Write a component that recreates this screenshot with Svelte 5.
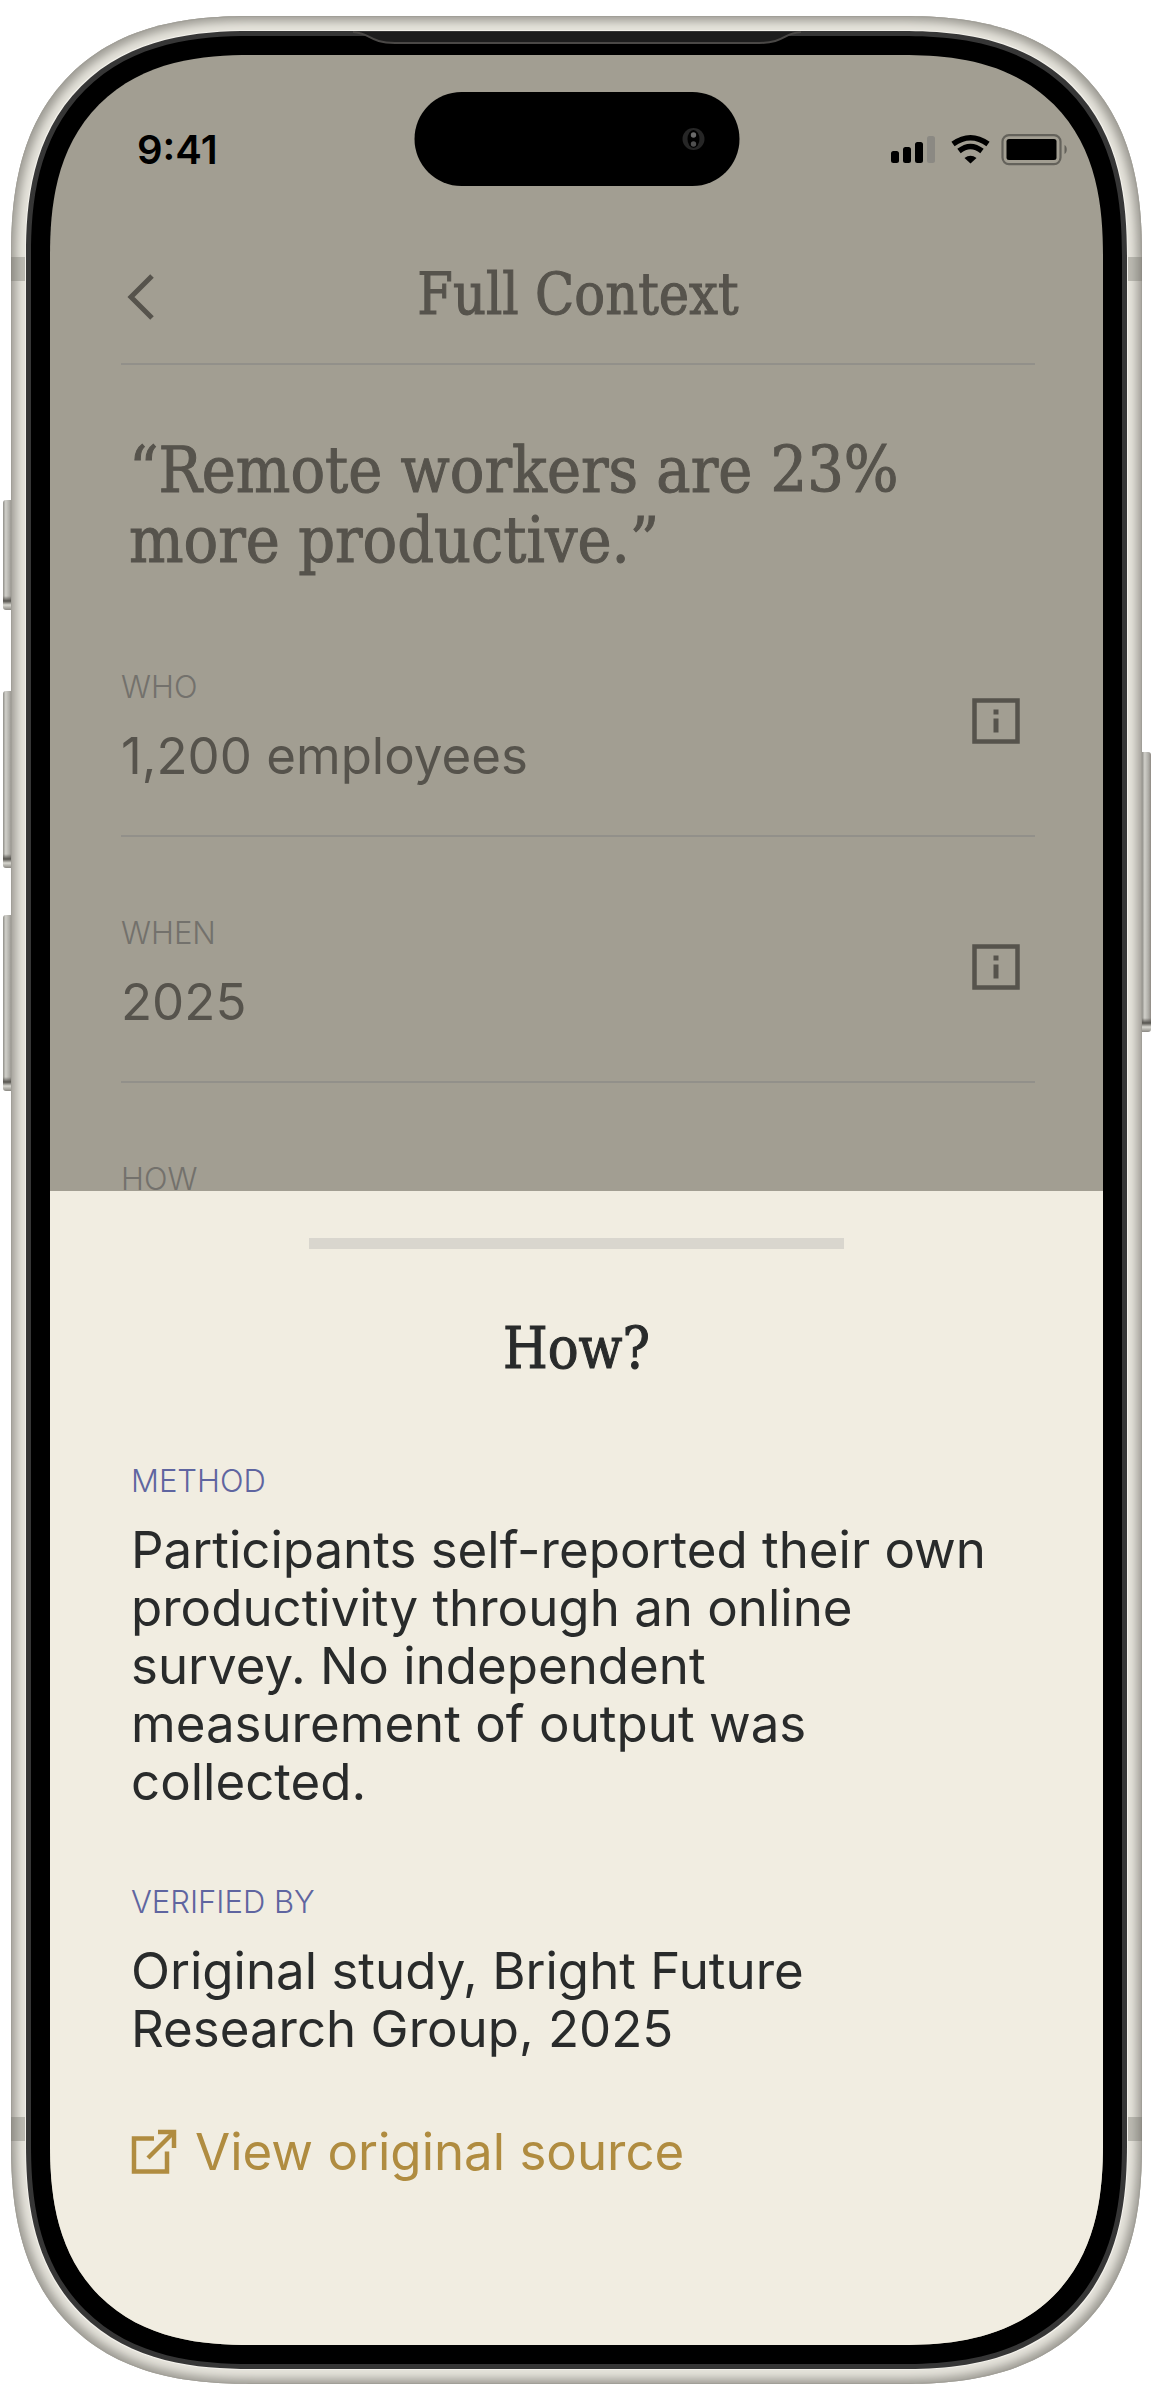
<script lang="ts">
	const facts = [
		{ label: 'Who', value: '1,200 employees' },
		{ label: 'When', value: '2025' },
		{ label: 'How' }
	];

	const details = [
		{
			label: 'Method',
			text: 'Participants self-reported their own productivity through an online survey. No independent measurement of output was collected.'
		},
		{ label: 'Verified by', text: 'Original study, Bright Future Research Group, 2025' }
	];
</script>

<main class="phone">
	<span class="key key--action"></span>
	<span class="key key--up"></span>
	<span class="key key--down"></span>
	<span class="key key--power"></span>

	<div class="metal">
		<span class="band band--tl"></span>
		<span class="band band--tr"></span>
		<span class="band band--bl"></span>
		<span class="band band--br"></span>
		<div class="rim">
			<svg class="speaker" width="452" height="14" viewBox="0 0 452 14" aria-hidden="true">
				<path d="M2 1C20 2 18 12 44 12H408C434 12 432 2 450 1Z" fill="#1d1d1d" />
				<path d="M2 1C20 2 18 12 44 12H408C434 12 432 2 450 1" fill="none" stroke="#4a4846" stroke-width="2" />
			</svg>
			<div class="bezel">
				<div class="screen">
					<div class="island">
						<svg width="24" height="24" viewBox="0 0 24 24" aria-hidden="true">
							<circle cx="12" cy="12" r="11" fill="#262626" />
							<ellipse cx="12" cy="12" rx="6" ry="9" fill="#000" />
							<circle cx="12" cy="8" r="2.700" fill="#6a6a6a" />
							<circle cx="12" cy="17" r="2.700" fill="#505050" />
						</svg>
					</div>

					<section class="page">
						<div class="status">
							<time>9:41</time>
							<svg width="178" height="32" viewBox="0 0 178 32" aria-hidden="true">
								<rect x="1" y="17" width="8" height="12" rx="2.5" />
								<rect x="13" y="13" width="8" height="16" rx="2.5" />
								<rect x="25" y="8" width="8" height="21" rx="2.5" />
								<rect x="37" y="2" width="8" height="27" rx="2.5" fill="#8b8983" />
								<path d="M63 10Q80.500 -2.500 98 10" fill="none" stroke="#000" stroke-width="5.500" />
								<path d="M69 17Q80.500 8 92 17" fill="none" stroke="#000" stroke-width="5.500" />
								<path d="M74.500 24Q80.500 19.500 86.500 24L80.500 29.500Z" />
								<rect x="112.500" y="1.100" width="58" height="29" rx="6.500" fill="none" stroke="#64625b" stroke-width="2.200" />
								<rect x="116.500" y="5" width="50" height="21" rx="2.500" />
								<path d="M174.500 11c3 1 3 8 0 9z" fill="#64625b" />
							</svg>
						</div>

						<header>
							<button class="back" aria-label="Back">
								<svg width="28" height="46" viewBox="0 0 28 46" aria-hidden="true">
									<path d="M25 2L4 23L25 44" fill="none" stroke="currentColor" stroke-width="5" />
								</svg>
							</button>
							<h1>Full Context</h1>
						</header>

						<blockquote>“Remote workers are 23% more productive.”</blockquote>

						<dl class="facts">
							{#each facts as fact}
								<div class="fact">
									<div>
										<dt class="label">{fact.label}</dt>
										{#if fact.value}
											<dd>{fact.value}</dd>
										{/if}
									</div>
									{#if fact.value}
										<button class="info" aria-label="About {fact.label}">
											<svg width="48" height="46" viewBox="0 0 48 46" aria-hidden="true">
												<rect x="2.500" y="2.500" width="43" height="41" fill="none" stroke="currentColor" stroke-width="4.500" />
												<path d="M21.500 11.500h5v5h-5zM21.500 20.500h5v14h-5z" fill="currentColor" />
											</svg>
										</button>
									{/if}
								</div>
							{/each}
						</dl>
					</section>

					<section class="sheet">
						<div class="handle"></div>
						<h2>How?</h2>
						{#each details as detail}
							<h3 class="label">{detail.label}</h3>
							<p>{detail.text}</p>
						{/each}
						<a href="#source">
							<svg width="46" height="46" viewBox="0 0 46 46" aria-hidden="true">
								<g fill="none" stroke="currentColor" stroke-width="4.500">
									<path d="M23 9.500H3V42.500H36V22.500" />
									<path d="M27 3H43V19" />
									<path d="M43 3L17 29" />
								</g>
							</svg>
							View original source
						</a>
					</section>
				</div>
			</div>
		</div>
	</div>
</main>

<style>
	:global(body) {
		margin: 0;
		background: #fff;
	}

	.phone {
		--serif: 'DejaVu Serif Condensed', 'DejaVu Serif', serif;
		--sans: Inter, sans-serif;

		position: relative;
		box-sizing: border-box;
		padding: 16px 10px 16px 11px;
		font-family: var(--sans);
	}

	h1,
	h2,
	h3,
	p,
	dl,
	dd,
	blockquote {
		margin: 0;
		font-weight: 400;
	}

	button {
		padding: 0;
		border: none;
		background: none;
		color: inherit;
	}

	svg {
		display: block;
	}

	/* Casing */

	.metal,
	.rim,
	.bezel,
	.screen {
		position: relative;
	}

	.metal {
		padding: 15px;
		border-radius: 200px;
		background: #e6e4dc;
		box-shadow:
			inset 0 0 0 1px #a19f98,
			inset 0 0 10px 5px #9d9b94;
	}

	.rim {
		padding: 5px;
		border-radius: 185px;
		background: #363636;
		box-shadow: 0 0 0 1px #f2f0ea;
	}

	.bezel {
		padding: 19px;
		border-radius: 180px;
		background: #000;
	}

	.screen {
		overflow: hidden;
		border-radius: 160px;
		background: #a29e92;
	}

	@supports (corner-shape: superellipse(1.3)) {
		.metal,
		.rim,
		.bezel,
		.screen {
			corner-shape: superellipse(1.3);
		}

		.metal {
			border-radius: 240px;
		}

		.rim {
			border-radius: 225px;
		}

		.bezel {
			border-radius: 220px;
		}

		.screen {
			border-radius: 201px;
		}
	}

	.band {
		position: absolute;
		width: 15px;
		height: 24px;
		background: rgb(110 108 100 / 0.35);
	}

	.band--tl,
	.band--tr {
		top: 241px;
	}

	.band--bl,
	.band--br {
		bottom: 243px;
	}

	.band--tl,
	.band--bl {
		left: 0;
	}

	.band--tr,
	.band--br {
		right: 0;
	}

	.key {
		position: absolute;
		left: 3px;
		width: 9px;
		border-radius: 3px 0 0 3px;
		background:
			linear-gradient(transparent calc(100% - 14px), #55534e calc(100% - 9px), #d8d7d0 calc(100% - 5px), #8a8882),
			linear-gradient(90deg, #8f8e88, #d0cfc9 30%, #b0afa9 70%, #8f8a84);
	}

	.key--action {
		top: 500px;
		height: 110px;
	}

	.key--up {
		top: 691px;
		height: 177px;
	}

	.key--down {
		top: 915px;
		height: 176px;
	}

	.key--power {
		top: 752px;
		right: 1px;
		left: auto;
		height: 280px;
		border-radius: 0 3px 3px 0;
	}

	.speaker {
		position: absolute;
		top: 0;
		left: 50%;
		z-index: 1;
		transform: translateX(-50%);
	}

	.island {
		position: absolute;
		top: 37px;
		left: 50%;
		display: flex;
		justify-content: flex-end;
		align-items: center;
		box-sizing: border-box;
		padding-right: 34px;
		width: 325px;
		height: 94px;
		border-radius: 47px;
		background: #000;
		transform: translateX(-50%);
	}

	/* Dimmed page */

	.page {
		display: flow-root;
		padding: 0 68px 0 71px;
		color: #56534c;
	}

	.status {
		display: flex;
		justify-content: space-between;
		align-items: center;
		margin: 71px -33px 0 16px;
		height: 48px;
	}

	.status time {
		color: #000;
		font: 600 40px/48px Inter, sans-serif;
	}

	header {
		display: grid;
		grid-template-columns: 40px 1fr 40px;
		align-items: center;
		margin-top: 32px;
		padding-top: 24px;
		height: 133px;
		border-bottom: 2px solid #92908a;
	}

	.back {
		padding-left: 6px;
	}

	h1,
	h2 {
		font: 57px/72px var(--serif);
		text-align: center;
	}

	h1,
	h2,
	blockquote {
		-webkit-text-stroke: 1px currentColor;
	}

	h1 {
		margin-bottom: 6px;
	}

	blockquote {
		margin: 70px 8px 0;
		font: 64px/70px var(--serif);
	}

	.label {
		font: 300 31px/40px var(--sans);
		text-transform: uppercase;
	}

	.facts {
		margin-top: 92px;
	}

	.fact {
		display: flex;
		justify-content: space-between;
		align-items: flex-start;
	}

	.fact:not(:last-child) {
		box-sizing: border-box;
		margin-bottom: 76px;
		height: 170px;
		border-bottom: 2px solid #92908a;
	}

	.fact .label {
		color: #73716c;
	}

	.fact dd {
		margin-top: 20px;
		font-size: 51px;
		line-height: 58px;
	}

	.info {
		margin: 31px 15px 0 0;
	}

	/* Bottom sheet */

	.sheet {
		position: relative;
		display: flow-root;
		box-sizing: border-box;
		margin-top: -8px;
		padding: 47px 81px 0;
		min-height: 1154px;
		background: #f1ede1;
		color: #292b2b;
	}

	.handle {
		margin: 0 auto;
		width: 60%;
		height: 11px;
		background: #d9d6ce;
	}

	h2 {
		margin: 63px 0 77px;
	}

	.sheet .label {
		margin-bottom: 20px;
		color: #5f65a0;
	}

	.sheet p {
		margin-bottom: 71px;
		font-size: 51px;
		line-height: 58px;
	}

	.sheet a {
		display: flex;
		align-items: center;
		gap: 18px;
		color: #b08c40;
		font-size: 51px;
		line-height: 46px;
		text-decoration: none;
	}
</style>
